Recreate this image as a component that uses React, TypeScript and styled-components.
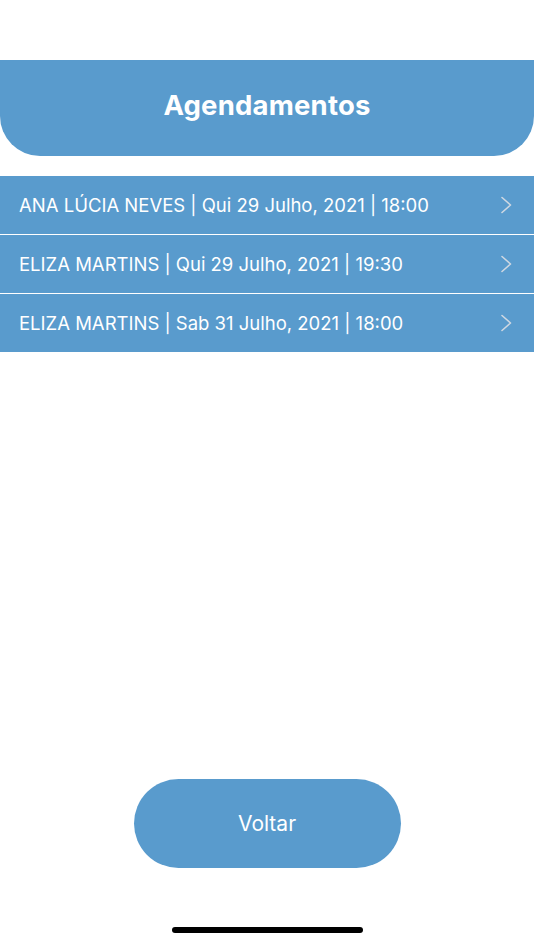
import React from "react";
import styled, { createGlobalStyle } from "styled-components";

const BLUE = "#599bcd";

const Global = createGlobalStyle`
  html, body { margin: 0; padding: 0; background: #ffffff; }
  body { font-family: Inter, "Noto Sans", "Liberation Sans", sans-serif; -webkit-font-smoothing: antialiased; }
  * { box-sizing: border-box; }
`;

const Page = styled.div`
  width: 534px;
  height: 950px;
  display: flex;
  flex-direction: column;
  padding-top: 60px;
  background: #fff;
  overflow: hidden;
`;

const Header = styled.header`
  height: 96px;
  background: ${BLUE};
  border-radius: 0 0 40px 40px;
  display: flex;
  align-items: center;
  justify-content: center;
`;

const Title = styled.h1`
  margin: 0;
  color: #fff;
  font-size: 27.5px;
  font-weight: 700;
  letter-spacing: 0.2px;
  padding-bottom: 6px;
`;

const List = styled.ul`
  list-style: none;
  margin: 20px 0 0;
  padding: 0;
  display: flex;
  flex-direction: column;
  gap: 1px;
`;

const Row = styled.li`
  height: 58px;
  background: ${BLUE};
  display: flex;
  align-items: center;
  justify-content: space-between;
  padding: 0 21px 0 19px;
  color: #fff;
  font-size: 18.5px;
  font-weight: 400;
`;

const RowText = styled.span`
  white-space: nowrap;
  padding-bottom: 1px;
`;

const Footer = styled.div`
  margin-top: auto;
  display: flex;
  flex-direction: column;
  align-items: center;
  padding-bottom: 17px;
`;

const BackButton = styled.button`
  width: 267px;
  height: 89px;
  border: none;
  border-radius: 45px;
  background: ${BLUE};
  color: #fff;
  font-family: inherit;
  font-size: 21px;
  font-weight: 400;
  cursor: pointer;
`;

const HomeIndicator = styled.div`
  width: 191px;
  height: 6px;
  border-radius: 3px;
  background: #000;
  margin-top: 59px;
`;

const Chevron = () => (
  <svg width="13" height="18" viewBox="0 0 13 18" fill="none">
    <path d="M2 1.5 L10.5 9 L2 16.5" stroke="#cfd8e2" strokeWidth="1.6" strokeLinecap="round" strokeLinejoin="round" />
  </svg>
);

const items = [
  "ANA LÚCIA NEVES | Qui 29 Julho, 2021 | 18:00",
  "ELIZA MARTINS | Qui 29 Julho, 2021 | 19:30",
  "ELIZA MARTINS | Sab 31 Julho, 2021 | 18:00",
];

export default function App() {
  return (
    <>
      <Global />
      <Page>
        <Header>
          <Title>Agendamentos</Title>
        </Header>
        <List>
          {items.map((t) => (
            <Row key={t}>
              <RowText>{t}</RowText>
              <Chevron />
            </Row>
          ))}
        </List>
        <Footer>
          <BackButton>Voltar</BackButton>
          <HomeIndicator />
        </Footer>
      </Page>
    </>
  );
}
